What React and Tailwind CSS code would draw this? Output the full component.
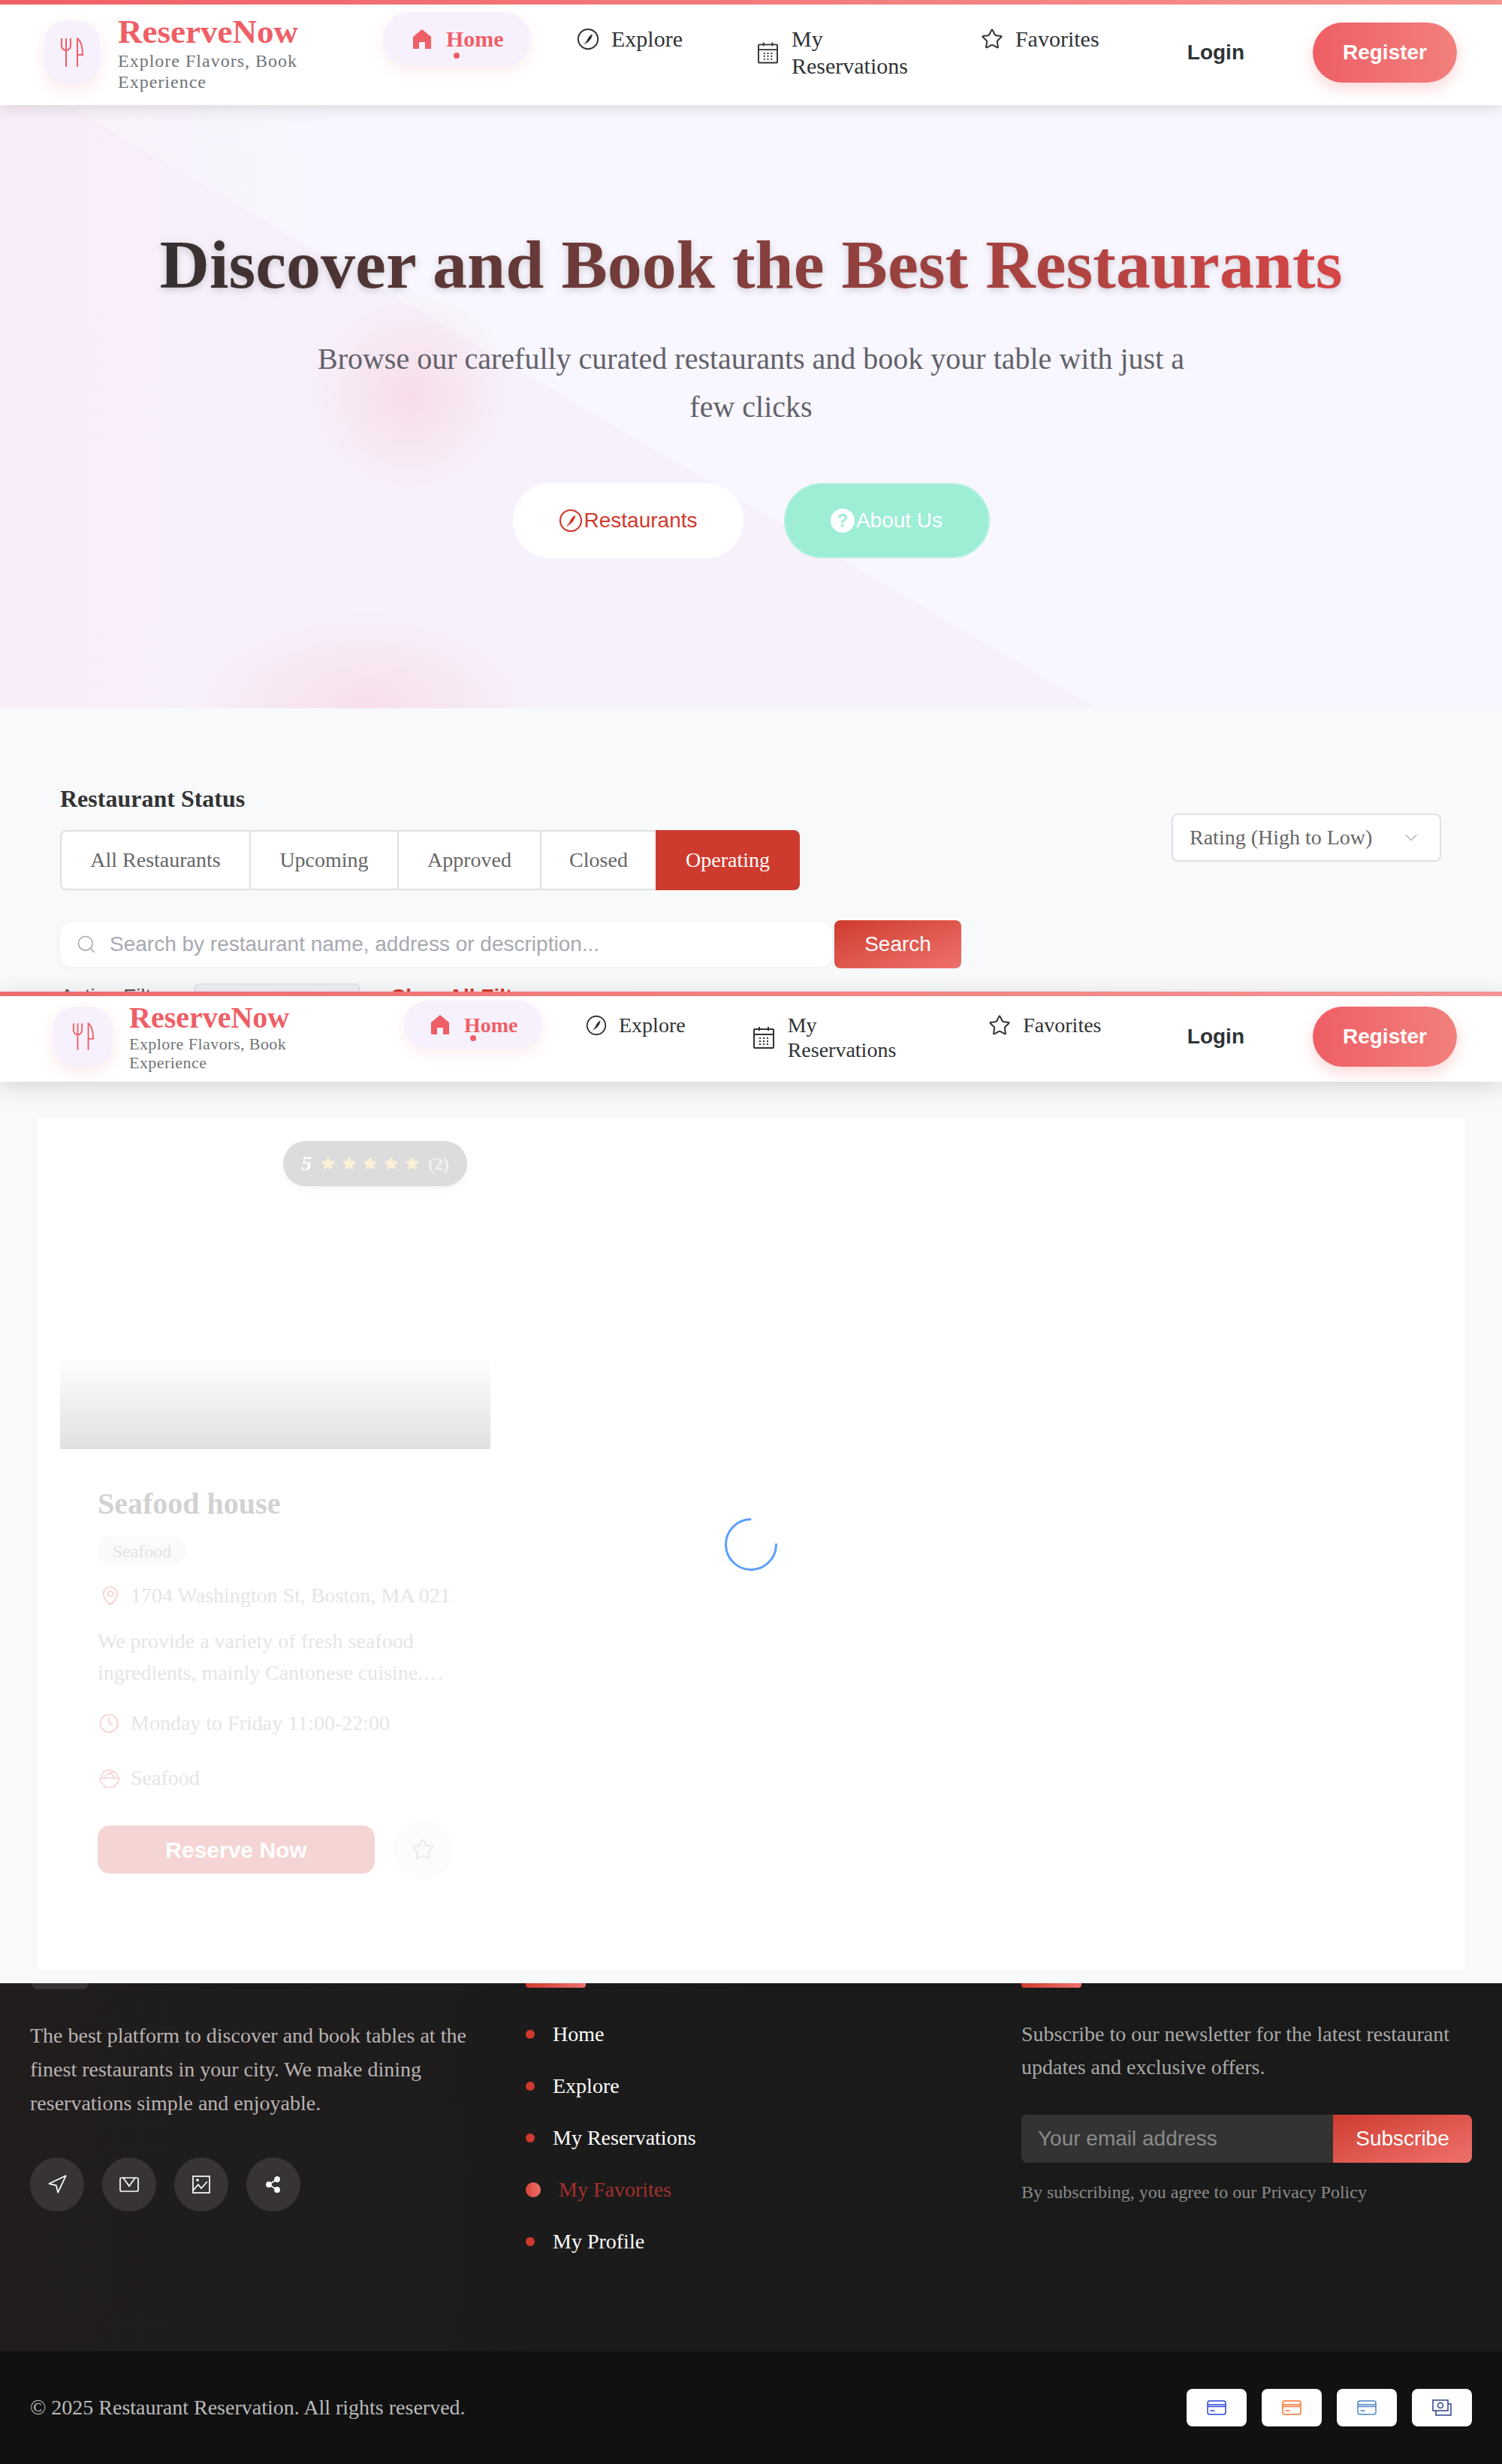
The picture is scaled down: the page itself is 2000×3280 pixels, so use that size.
import { Star, MapPin, Clock, Search, ChevronDown, Navigation } from "lucide-react";

const serif = "font-['Liberation_Serif',serif]";
const sans = "font-['Liberation_Sans',sans-serif]";

function LogoIcon({ className }) {
  return (
    <svg viewBox="0 0 32 40" fill="none" stroke="currentColor" strokeWidth="2" className={className}>
      <path d="M2 1v10a6 6 0 0 0 12 0V1M8 1v38" />
      <path d="M23 39V1c4 3 7 10 7 22h-7" />
    </svg>
  );
}

function HomeIcon({ className }) {
  return (
    <svg viewBox="0 0 28 28" fill="currentColor" className={className}>
      <path d="M14 1l12 10v16h-8v-9h-8v9H2V11z" />
    </svg>
  );
}

function CompassIcon({ className, sw = 2 }) {
  return (
    <svg viewBox="0 0 24 24" fill="none" className={className}>
      <circle cx="12" cy="12" r="10.5" stroke="currentColor" strokeWidth={sw} />
      <path d="M16.5 6.5c.5 3.5-3 8.5-7.5 10.5-1 .5-2 .5-2 .5s3-1.5 4-4.500c1-2.500 3-5 5.500-6.500z" fill="currentColor" />
    </svg>
  );
}

function CalendarIcon({ className }) {
  return (
    <svg viewBox="0 0 28 30" fill="none" stroke="currentColor" strokeWidth="2" className={className}>
      <rect x="1" y="4" width="26" height="25" rx="1" />
      <path d="M1 11h26M8 1v5M20 1v5" />
      <path d="M8 16h2M13 16h2M18 16h2M8 20h2M13 20h2M18 20h2M8 24h2M13 24h2M18 24h2" />
    </svg>
  );
}

function BowlIcon({ className }) {
  return (
    <svg viewBox="0 0 28 26" fill="none" stroke="currentColor" strokeWidth="1.5" className={className}>
      <path d="M1 13h26c0 5-4 8-6 9v3H7v-3c-2-1-6-4-6-9z" />
      <path d="M3 13C3 6 8 2 13 2c5 0 10 3 12 11M8 13c0-4 3-6 6-6s5 2 6 6M13 7c3-3 9-3 11 2" />
    </svg>
  );
}

function CardIcon({ className }) {
  return (
    <svg viewBox="0 0 26 20" fill="none" stroke="currentColor" strokeWidth="1.500" className={className}>
      <rect x="1" y="1" width="24" height="18" rx="3" />
      <path d="M1 6h24M1 8.500h24M4.500 14h6" />
    </svg>
  );
}

function CashIcon({ className }) {
  return (
    <svg viewBox="0 0 26 22" fill="none" stroke="currentColor" strokeWidth="1.500" className={className}>
      <path d="M5 15v6h20V6h-4" />
      <rect x="1" y="1" width="20" height="14" />
      <circle cx="11" cy="8" r="3.500" />
    </svg>
  );
}

function MailIcon() {
  return (
    <svg viewBox="0 0 26 20" fill="none" stroke="currentColor" strokeWidth="1.700" className="h-[20px] w-[26px]">
      <rect x="1" y="1" width="24" height="18" rx="2" />
      <path d="M5 1l8 11 8-11" />
    </svg>
  );
}

function PictureIcon() {
  return (
    <svg viewBox="0 0 24 24" fill="none" stroke="currentColor" strokeWidth="1.700" className="h-6 w-6">
      <rect x="1" y="1" width="22" height="22" />
      <path d="M1 20l7-8 4 5 8-9" />
      <circle cx="7" cy="6" r="1" fill="currentColor" />
    </svg>
  );
}

function ShareIcon() {
  return (
    <svg viewBox="0 0 24 24" fill="currentColor" stroke="currentColor" strokeWidth="1.800" className="h-6 w-6">
      <circle cx="6" cy="12" r="3" />
      <circle cx="17" cy="5" r="3" />
      <circle cx="17" cy="19" r="3" />
      <path d="M6 12l11-7M6 12l11 7" fill="none" />
    </svg>
  );
}

function TopHeader() {
  return (
    <header className="relative z-10 h-[140px] bg-white shadow-[0_4px_20px_rgba(0,0,0,0.12)]">
      <div className="h-[6px] bg-gradient-to-r from-[#ef5f66] to-[#f59391]" />
      <div className="flex h-[128px] items-center">
        <div className="ml-[59px] flex h-[84px] w-[74px] shrink-0 items-center justify-center rounded-[30px] bg-[#f7f1fd] text-[#ef5f66] shadow-[0_6px_20px_rgba(239,95,102,0.15)]">
          <LogoIcon className="h-[40px] w-[32px]" />
        </div>
        <div className={`ml-6 w-[290px] shrink-0 ${serif}`}>
          <div className="text-[45px] font-bold leading-[50px] text-[#ef5f66]">ReserveNow</div>
          <div className="text-[24px] leading-[28px] tracking-[1px] text-[#6f7478]">
            Explore Flavors, Book<br />Experience
          </div>
        </div>
        <nav className={`mt-[10px] flex shrink-0 items-start self-start text-[30px] leading-[36px] text-[#2f3336] ${serif}`}>
          <a className="relative ml-[63px] flex w-[196px] items-center gap-[18px] rounded-[36px] bg-[#f7f1fd] py-[18px] pl-[38px] font-bold text-[#ef5f66] shadow-[0_6px_20px_rgba(239,95,102,0.12)]">
            <HomeIcon className="h-[28px] w-[28px]" />
            Home
            <span className="absolute bottom-[10px] left-[94px] h-[8px] w-[8px] rounded-full bg-[#ef5f66]" />
          </a>
          <a className="ml-[62px] flex items-center gap-4 py-[18px]">
            <CompassIcon className="h-[30px] w-[30px]" sw={1.600} />
            Explore
          </a>
          <a className="ml-[100px] flex items-center gap-[18px] py-[18px]">
            <CalendarIcon className="h-[30px] w-[27px]" />
            <span>My<br />Reservations</span>
          </a>
          <a className="ml-[97px] flex items-center gap-4 py-[18px]">
            <Star className="h-[30px] w-[30px]" strokeWidth={1.600} />
            Favorites
          </a>
        </nav>
        <div className={`ml-auto text-[28px] font-bold text-[#2f3336] ${sans}`}>Login</div>
        <div className={`ml-[91px] mr-[60px] flex h-[80px] w-[192px] items-center justify-center rounded-[40px] bg-gradient-to-r from-[#ee5e65] to-[#f2807c] text-[28px] font-bold text-white shadow-[0_8px_20px_rgba(239,95,102,0.25)] ${sans}`}>
          Register
        </div>
      </div>
    </header>
  );
}

function StickyHeader() {
  return (
    <header className="absolute left-0 top-[1320px] z-20 h-[120px] w-full bg-white shadow-[0_6px_30px_rgba(0,0,0,0.15)]">
      <div className="h-[6px] bg-gradient-to-r from-[#ef6a70] to-[#f59391]" />
      <div className="flex h-[108px] items-center">
        <div className="ml-[71px] flex h-[80px] w-[79px] shrink-0 items-center justify-center rounded-[30px] bg-[#f7f1fd] text-[#ef5f66] shadow-[0_6px_20px_rgba(239,95,102,0.15)]">
          <LogoIcon className="h-[38px] w-[30px]" />
        </div>
        <div className={`ml-[22px] w-[300px] shrink-0 ${serif}`}>
          <div className="text-[40px] font-bold leading-[44px] text-[#ef5f66]">ReserveNow</div>
          <div className="text-[22px] leading-[25px] tracking-[0.45px] text-[#6f7478]">
            Explore Flavors, Book<br />Experience
          </div>
        </div>
        <nav className={`mt-[6px] flex shrink-0 items-start self-start text-[28px] leading-[33px] text-[#2f3336] ${serif}`}>
          <a className="relative ml-[66px] flex h-[64px] w-[184px] items-center gap-[18px] rounded-[32px] bg-[#f7f1fd] pl-[34px] font-bold text-[#ef5f66] shadow-[0_6px_20px_rgba(239,95,102,0.12)]">
            <HomeIcon className="h-[28px] w-[28px]" />
            Home
            <span className="absolute bottom-[10px] left-[88px] h-[8px] w-[8px] rounded-full bg-[#ef5f66]" />
          </a>
          <a className="ml-[58px] flex items-center gap-4 py-4">
            <CompassIcon className="h-[28px] w-[28px]" sw={1.600} />
            Explore
          </a>
          <a className="ml-[90px] flex items-center gap-[18px] py-4">
            <CalendarIcon className="h-[30px] w-[28px]" />
            <span>My<br />Reservations</span>
          </a>
          <a className="ml-[123px] flex items-center gap-4 py-4">
            <Star className="h-[30px] w-[30px]" strokeWidth={1.600} />
            Favorites
          </a>
        </nav>
        <div className={`ml-auto text-[28px] font-bold text-[#2f3336] ${sans}`}>Login</div>
        <div className={`ml-[91px] mr-[60px] flex h-[80px] w-[192px] items-center justify-center rounded-[40px] bg-gradient-to-r from-[#ee5e65] to-[#f2807c] text-[28px] font-bold text-white shadow-[0_8px_20px_rgba(239,95,102,0.25)] ${sans}`}>
          Register
        </div>
      </div>
    </header>
  );
}

function Hero() {
  return (
    <section className="relative h-[803px] overflow-hidden bg-[#f8f6fe]">
      <div className="absolute inset-0 bg-[#f7f1fc] [clip-path:polygon(90px_0,1460px_803px,0_803px,0_0)]" />
      <div className="absolute inset-0 bg-[radial-gradient(circle_at_545px_385px,rgba(245,150,165,0.22),transparent_140px),radial-gradient(ellipse_230px_130px_at_490px_800px,rgba(245,150,165,0.2),transparent),linear-gradient(90deg,rgba(250,228,240,0.3),transparent_22%)]" />
      <div className={`relative flex flex-col items-center pt-[164px] ${serif}`}>
        <h1 className="bg-gradient-to-r from-[#352f30] to-[#d64545] bg-clip-text text-[92px] font-bold leading-[96px] text-transparent drop-shadow-[0_3px_5px_rgba(0,0,0,0.18)]">
          Discover and Book the Best Restaurants
        </h1>
        <p className="mt-[46px] w-[1200px] text-center text-[40px] leading-[64px] text-[#62626a]">
          Browse our carefully curated restaurants and book your table with just a few clicks
        </p>
      </div>
      <div className={`relative mt-[69px] flex justify-center gap-[54px] text-[28px] ${sans}`}>
        <a className="flex h-[100px] w-[307px] items-center justify-center gap-0.5 rounded-[50px] bg-white text-[#cf3a2e]">
          <CompassIcon className="h-[32px] w-[32px]" sw={1.600} />
          Restaurants
        </a>
        <a className="flex h-[100px] w-[274px] items-center justify-center gap-0.5 rounded-[50px] border-2 border-[#b5f1df] bg-[#9eedd5] text-white">
          <span className="flex h-[32px] w-[32px] items-center justify-center rounded-full bg-white text-[24px] font-bold leading-none text-[#9eedd5]">?</span>
          About Us
        </a>
      </div>
    </section>
  );
}

function FilterSection() {
  const tabs = [
    { label: "All Restaurants", w: "w-[252px]" },
    { label: "Upcoming", w: "w-[197px]" },
    { label: "Approved", w: "w-[190px]" },
    { label: "Closed", w: "w-[154px]" },
  ];
  return (
    <section className="h-[497px] overflow-hidden px-[80px] pt-[100px]">
      <div className="flex justify-between">
        <div>
          <h3 className={`text-[32px] font-bold leading-[40px] text-[#333333] ${serif}`}>Restaurant Status</h3>
          <div className={`mt-[22px] flex h-[80px] text-[28px] text-[#666666] ${serif}`}>
            {tabs.map((t, i) => (
              <div
                key={t.label}
                className={`flex items-center justify-center border-y-2 border-l-2 border-[#dfe0e6] bg-white ${t.w} ${i === 0 ? "rounded-l-lg" : ""}`}
              >
                {t.label}
              </div>
            ))}
            <div className="flex w-[192px] items-center justify-center rounded-r-lg bg-[#cf3a2e] text-white">Operating</div>
          </div>
        </div>
        <div className={`mr-[1px] mt-[40px] flex h-[64px] w-[359px] items-center justify-between rounded-lg border-2 border-[#dfe0e6] bg-white pl-[22px] pr-[24px] text-[28px] text-[#666666] ${serif}`}>
          Rating (High to Low)
          <ChevronDown className="h-[28px] w-[28px] text-[#b5b6bc]" strokeWidth={1.200} />
        </div>
      </div>
      <div className="mt-[40px] flex items-center">
        <div className={`flex h-[60px] w-[1028px] items-center rounded-2xl bg-white pl-[21px] text-[28px] text-[#a8a9b2] shadow-[0_2px_10px_rgba(0,0,0,0.04)] ${sans}`}>
          <Search className="h-[28px] w-[28px]" strokeWidth={1.400} />
          <span className="ml-[17px]">Search by restaurant name, address or description...</span>
        </div>
        <div className={`ml-[3px] flex h-[64px] w-[169px] items-center justify-center rounded-lg bg-gradient-to-br from-[#cf3a2e] to-[#ee716c] text-[28px] text-white ${sans}`}>
          Search
        </div>
      </div>
      <div className={`mt-[20px] flex h-[60px] items-start text-[28px] leading-[36px] ${sans}`}>
        <span className="w-[178px] text-[#555555]">Active Filters:</span>
        <div className="h-[50px] w-[222px] rounded-lg border-2 border-[#e4e5ea] bg-[#f0f1f5]" />
        <span className="ml-[40px] font-bold text-[#cf3a2e]">Clear All Filters</span>
      </div>
    </section>
  );
}

function ResultCard() {
  return (
    <div className="w-[573px] pl-[30px] pt-[30px]">
      <div className="relative h-[410px] w-[573px] bg-gradient-to-b from-white from-70% to-[#e0e0e0]">
        <div className={`absolute right-[31px] top-0 flex h-[60px] w-[245px] items-center rounded-[30px] bg-[#dcdcdc] pl-[24px] shadow-[0_4px_12px_rgba(0,0,0,0.04)] ${serif}`}>
          <span className="text-[28px] font-bold italic text-white">5</span>
          <span className="ml-[13px] flex gap-[10px]">
            {[1, 2, 3, 4, 5].map((n) => (
              <Star key={n} className="h-[18px] w-[18px] fill-[#fbf0d6] text-[#fbf0d6]" />
            ))}
          </span>
          <span className="ml-[12px] text-[24px] font-bold text-[#f2f2f2]">(2)</span>
        </div>
      </div>
      <div className={`pl-[50px] ${serif}`}>
        <h3 className="mt-[50px] text-[40px] font-bold leading-[46px] text-[#d2d2d2]">Seafood house</h3>
        <div className="mt-[20px] flex h-[39px] w-[118px] items-center justify-center rounded-[20px] bg-[#fafafa] text-[24px] text-[#e3e3e3]">Seafood</div>
        <div className="mt-[20px] flex h-[40px] w-[473px] items-center overflow-hidden text-[28px] text-[#e5e5e5]">
          <MapPin className="ml-[3px] h-[28px] w-[28px] shrink-0 text-[#f6d2d0]" strokeWidth={1.600} />
          <span className="ml-[13px] whitespace-nowrap">1704 Washington St, Boston, MA 02118</span>
        </div>
        <p className="mt-[20px] w-[473px] text-[28px] leading-[42px] text-[#e5e5e5]">
          We provide a variety of fresh seafood<br />ingredients, mainly Cantonese cuisine.…
        </p>
        <div className="mt-[26px] flex h-[40px] items-center text-[28px] text-[#e5e5e5]">
          <Clock className="ml-[1px] h-[28px] w-[28px] text-[#f6d2d0]" strokeWidth={1.600} />
          <span className="ml-[15px]">Monday to Friday 11:00-22:00</span>
        </div>
        <div className="mt-[33px] flex h-[40px] items-center text-[28px] text-[#e5e5e5]">
          <BowlIcon className="ml-[2px] h-[26px] w-[28px] text-[#f6d2d0]" />
          <span className="ml-[14px]">Seafood</span>
        </div>
        <div className="mt-[35px] flex items-center">
          <div className={`flex h-[64px] w-[369px] items-center justify-center rounded-2xl bg-[#f4d5d3] text-[30px] font-bold text-white ${sans}`}>Reserve Now</div>
          <div className="ml-[24px] flex h-[80px] w-[80px] items-center justify-center rounded-full bg-[#fcfcfc]">
            <Star className="h-[32px] w-[32px] text-[#eaeaea]" strokeWidth={1.500} />
          </div>
        </div>
      </div>
    </div>
  );
}

function Results() {
  return (
    <main className="relative h-[1200px] pt-[49px]">
      <div className="relative mx-[50px] h-[1134px] bg-white">
        <ResultCard />
        <svg viewBox="0 0 72 72" fill="none" className="absolute left-[914px] top-[531px] h-[72px] w-[72px] text-[#5b9ffc]">
          <path d="M35 2.500A33.500 33.500 0 1 0 69.500 36" stroke="currentColor" strokeWidth="3" strokeLinecap="round" />
        </svg>
      </div>
    </main>
  );
}

function Footer() {
  const links = ["Home", "Explore", "My Reservations", "My Favorites", "My Profile"];
  return (
    <>
      <footer className={`flex h-[490px] bg-gradient-to-r from-[#211d1d] to-[#1a1a1a] to-50% pl-[40px] ${serif}`}>
        <div className="w-[660px]">
          <div className="ml-[2px] h-[8px] w-[76px] rounded-b-lg bg-[#383434]" />
          <p className="mt-[39px] w-[600px] text-[28px] leading-[45px] text-[#b8b4b4]">
            The best platform to discover and book tables at the finest restaurants in your city. We make dining reservations simple and enjoyable.
          </p>
          <div className="mt-[50px] flex gap-6 text-white">
            <span className="flex h-[72px] w-[72px] items-center justify-center rounded-full bg-[#383434]">
              <Navigation className="h-[28px] w-[28px]" strokeWidth={1.500} />
            </span>
            <span className="flex h-[72px] w-[72px] items-center justify-center rounded-full bg-[#383434]"><MailIcon /></span>
            <span className="flex h-[72px] w-[72px] items-center justify-center rounded-full bg-[#383434]"><PictureIcon /></span>
            <span className="flex h-[72px] w-[72px] items-center justify-center rounded-full bg-[#383434]"><ShareIcon /></span>
          </div>
        </div>
        <div className="w-[660px]">
          <div className="h-[6px] w-[80px] rounded-b bg-gradient-to-r from-[#cf3a2e] to-[#ee716c]" />
          <ul className="mt-[44px] flex flex-col gap-[33px] text-[28px] leading-[36px] text-white">
            {links.map((l) =>
              l === "My Favorites" ? (
                <li key={l} className="flex items-center text-[#a3302c]">
                  <span className="h-[20px] w-[20px] rounded-full bg-gradient-to-r from-[#d9443b] to-[#ee716c]" />
                  <span className="ml-[24px]">{l}</span>
                </li>
              ) : (
                <li key={l} className="flex items-center">
                  <span className="h-[12px] w-[12px] rounded-full bg-[#cf3a2e]" />
                  <span className="ml-[24px]">{l}</span>
                </li>
              )
            )}
          </ul>
        </div>
        <div className="w-[600px]">
          <div className="h-[6px] w-[80px] rounded-b bg-gradient-to-r from-[#cf3a2e] to-[#ee716c]" />
          <p className="mt-[40px] text-[28px] leading-[44px] text-[#a9a9a9]">
            Subscribe to our newsletter for the latest restaurant updates and exclusive offers.
          </p>
          <div className={`mt-[41px] flex h-[64px] text-[28px] ${sans}`}>
            <div className="flex w-[415px] items-center rounded-l-lg bg-[#333333] pl-[22px] text-[#8a8a8a]">Your email address</div>
            <div className="flex w-[185px] items-center justify-center rounded-r-lg bg-gradient-to-br from-[#cf3a2e] to-[#ee716c] text-white">Subscribe</div>
          </div>
          <p className="mt-[21px] text-[24px] leading-[36px] text-[#8a8a8a]">By subscribing, you agree to our Privacy Policy</p>
        </div>
      </footer>
      <div className={`flex h-[150px] items-center justify-between bg-[#111111] px-[40px] ${serif}`}>
        <span className="text-[28px] text-[#bbbbbb]">© 2025 Restaurant Reservation. All rights reserved.</span>
        <div className="flex gap-5">
          <span className="flex h-[50px] w-[80px] items-center justify-center rounded-lg bg-white text-[#2b46d6]"><CardIcon className="h-[20px] w-[26px]" /></span>
          <span className="flex h-[50px] w-[80px] items-center justify-center rounded-lg bg-white text-[#f5712f]"><CardIcon className="h-[20px] w-[26px]" /></span>
          <span className="flex h-[50px] w-[80px] items-center justify-center rounded-lg bg-white text-[#4d84c7]"><CardIcon className="h-[20px] w-[26px]" /></span>
          <span className="flex h-[50px] w-[80px] items-center justify-center rounded-lg bg-white text-[#2e4193]"><CashIcon className="h-[22px] w-[26px]" /></span>
        </div>
      </div>
    </>
  );
}

export default function App() {
  return (
    <div className="relative h-[3280px] w-[2000px] overflow-hidden bg-[#f8f9fb]">
      <TopHeader />
      <Hero />
      <FilterSection />
      <StickyHeader />
      <Results />
      <Footer />
    </div>
  );
}
